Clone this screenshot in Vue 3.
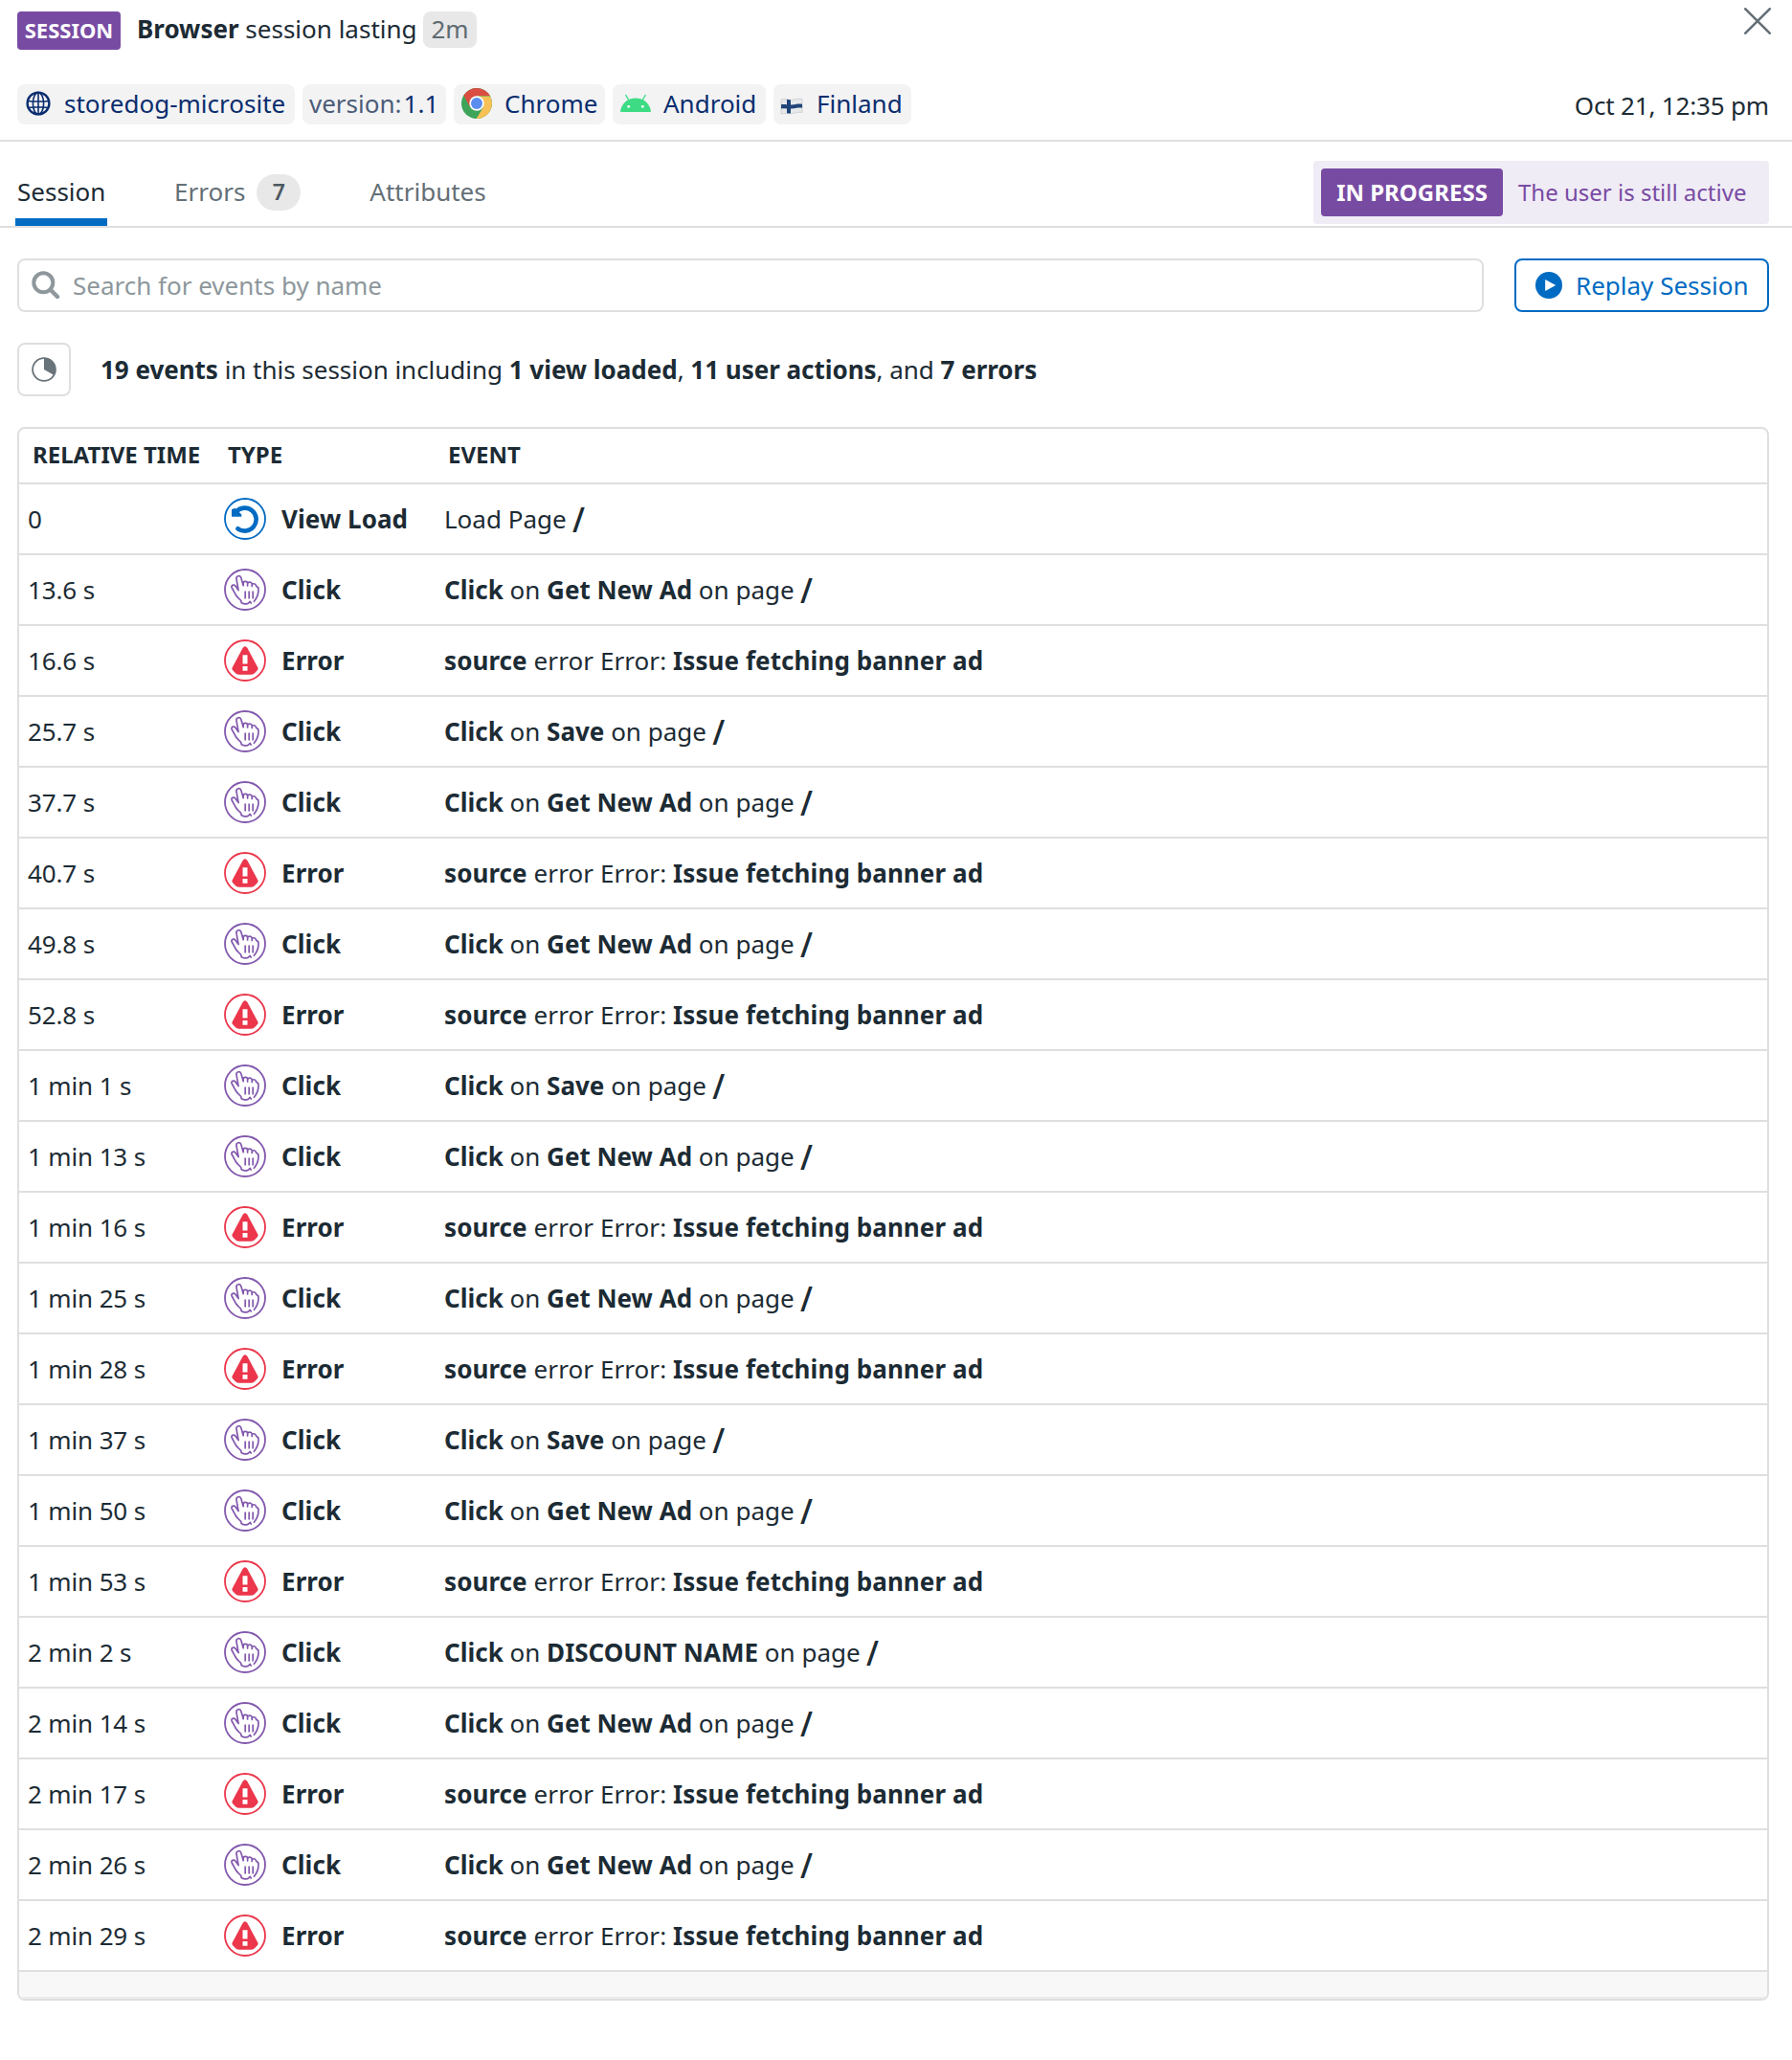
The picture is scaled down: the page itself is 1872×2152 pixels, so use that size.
<script setup>
const click = (time, target) => ({
  time,
  type: 'click',
  label: 'Click',
  parts: [['Click', 1], [' on ', 0], [target, 1], [' on page ', 0]],
  path: '/',
})
const error = (time) => ({
  time,
  type: 'error',
  label: 'Error',
  parts: [['source', 1], [' error Error: ', 0], ['Issue fetching banner ad', 1]],
})

const ad = 'Get New Ad'
const events = [
  { time: '0', type: 'view', label: 'View Load', parts: [['Load Page ', 0]], path: '/' },
  click('13.6 s', ad),
  error('16.6 s'),
  click('25.7 s', 'Save'),
  click('37.7 s', ad),
  error('40.7 s'),
  click('49.8 s', ad),
  error('52.8 s'),
  click('1 min 1 s', 'Save'),
  click('1 min 13 s', ad),
  error('1 min 16 s'),
  click('1 min 25 s', ad),
  error('1 min 28 s'),
  click('1 min 37 s', 'Save'),
  click('1 min 50 s', ad),
  error('1 min 53 s'),
  click('2 min 2 s', 'DISCOUNT NAME'),
  click('2 min 14 s', ad),
  error('2 min 17 s'),
  click('2 min 26 s', ad),
  error('2 min 29 s'),
]

const summary = [
  ['19 events', 1], [' in this session including ', 0], ['1 view loaded', 1], [', ', 0],
  ['11 user actions', 1], [', and ', 0], ['7 errors', 1],
]
</script>

<template>
  <main class="panel">
    <header class="head">
      <div class="title-row">
        <span class="badge">SESSION</span>
        <h1 class="title"><b>Browser</b>{{ ' session lasting' }}</h1>
        <span class="duration">2m</span>
        <button class="close" aria-label="Close">
          <svg width="28" height="28" viewBox="0 0 28 28"><path d="M1.3 1.3 26.7 26.7M26.7 1.3 1.3 26.7" fill="none" stroke="#646f76" stroke-width="2.6" stroke-linecap="round" /></svg>
        </button>
      </div>
      <div class="tag-row">
        <span class="tag tag-site">
          <svg width="26" height="26" viewBox="0 0 26 26" fill="none" stroke="#0a2d6e" stroke-width="1.6">
            <circle cx="13" cy="13" r="11.4" stroke-width="2.4" />
            <ellipse cx="13" cy="13" rx="5.6" ry="11.4" />
            <path d="M13 1.6v22.800M1.600 10.500q11.400 1 22.800 0M2.800 17.500q10.200-1.600 20.400 0" />
          </svg>
          <span class="t-site">storedog-microsite</span>
        </span>
        <span class="tag tag-version"><span class="key">version:</span><span class="value">1.1</span></span>
        <span class="tag tag-chrome">
          <svg width="32" height="32" viewBox="0 0 32 32">
            <circle cx="16" cy="16" r="16" fill="#3da45a" />
            <path d="M16 16 2.4 7.6A16 16 0 0 1 29.9 8H16z" fill="#da4d42" />
            <path d="M2.4 7.6 9 20 16 16V8z" fill="#da4d42" />
            <path d="M16 8.5h14.1A16 16 0 0 1 15.6 32L22.9 20z" fill="#f7c155" />
            <circle cx="16" cy="16" r="7.7" fill="#fff" />
            <circle cx="16" cy="16" r="6" fill="#5b8def" />
          </svg>
          <span>Chrome</span>
        </span>
        <span class="tag tag-android">
          <svg width="32" height="32" viewBox="0 0 32 32">
            <path d="M0 25C.6 16.500 7.500 10.500 16 10.500S31.400 16.500 32 25z" fill="#3ddc84" />
            <path d="M9 13 5.800 7.400M23 13l3.200-5.600" stroke="#3ddc84" stroke-width="1.3" stroke-linecap="round" />
            <circle cx="8.700" cy="19.300" r="1.400" fill="#fff" />
            <circle cx="23.300" cy="19.300" r="1.400" fill="#fff" />
          </svg>
          <span>Android</span>
        </span>
        <span class="tag tag-finland">
          <svg width="24" height="18" viewBox="0 0 24 18">
            <path d="M1 2C5 .2 8 3 12 2.400S19 .6 23 1.300V15.500C19 14.800 16 16 12 16.600S5 15.800 1 17z" fill="#e6e8ea" stroke="#c3c7cb" stroke-width=".7" />
            <path d="M1 7.200c4-1 7 .8 11 .4s7-1.600 11-.8v4c-4-.8-7 .4-11 .8s-7-1.200-11 0z" fill="#1f4478" />
            <path d="M7 1.800 11 2.400V16.600L7 16.200z" fill="#1f4478" />
          </svg>
          <span>Finland</span>
        </span>
        <time class="date">Oct 21, 12:35 pm</time>
      </div>
    </header>

    <nav class="tabs">
      <a class="tab active">Session</a>
      <a class="tab tab-errors">Errors<span class="count">7</span></a>
      <a class="tab tab-attrs">Attributes</a>
      <div class="status">
        <span class="status-badge">IN PROGRESS</span>
        <span class="status-text">The user is still active</span>
      </div>
    </nav>

    <section class="tools">
      <div class="search">
        <svg width="30" height="30" viewBox="0 0 30 30" fill="none" stroke="#8d979c"><circle cx="12.300" cy="12.300" r="10" stroke-width="4" /><path d="m19.800 19.800 7.200 7.200" stroke-width="4.400" stroke-linecap="round" /></svg>
        <span>Search for events by name</span>
      </div>
      <button class="replay">
        <svg width="28" height="28" viewBox="0 0 28 28"><circle cx="14" cy="14" r="14" fill="#006bc2" /><path d="M10.200 8v12l11-6z" fill="#fff" /></svg>
        <span>Replay Session</span>
      </button>
    </section>

    <section class="summary">
      <button class="pie" aria-label="Breakdown">
        <svg width="26" height="26" viewBox="0 0 26 26"><circle cx="13" cy="13" r="11.900" fill="none" stroke="#69737a" stroke-width="1.800" /><path d="M13 13V1A12 12 0 0 1 23.500 19z" fill="#69737a" /></svg>
      </button>
      <p><span v-for="(p, i) in summary" :key="i" :class="{ strong: p[1] }">{{ p[0] }}</span></p>
    </section>

    <section class="table">
      <div class="row thead">
        <span class="c-time">RELATIVE TIME</span>
        <span class="c-type">TYPE</span>
        <span class="c-event">EVENT</span>
      </div>
      <div v-for="(e, i) in events" :key="i" class="row">
        <span class="c-time elapsed">{{ e.time }}</span>
        <span class="c-type">
          <svg v-if="e.type === 'view'" width="44" height="44" viewBox="0 0 44 44">
            <circle cx="22" cy="22" r="21" fill="none" stroke="#006bc2" stroke-width="1.800" />
            <path d="M12.800 14.500A12 12 0 1 1 14.500 32.300" fill="none" stroke="#006bc2" stroke-width="4.600" stroke-linecap="round" />
            <path d="M8 12.300 11.500 10.800 18.300 17.500V19.800H8z" fill="#006bc2" />
          </svg>
          <svg v-else-if="e.type === 'click'" width="44" height="44" viewBox="0 0 44 44" fill="none" stroke="#8258ad">
            <circle cx="22" cy="22" r="21" stroke-width="1.800" />
            <path stroke-width="1.700" stroke-linejoin="round" stroke-linecap="round" d="M18.200 35.700 17.700 33.300C15 31 12.800 29 11.600 26.200L8.200 20C7 17.600 10.400 16 12 18.200L15.100 22.600 13 10.800C12.600 7.200 17 6.600 17.900 9.800L20.200 17.700V15.200C20.200 12.800 24.200 12.600 24.600 15V17.900 15.700C25.200 13.400 28.800 13.600 29.200 15.800V18.400 17C30 15 33.200 15.500 33.400 17.800L35.800 20C36.600 25 35.600 29 31.400 34.300M18.200 35.700C19.500 37 24.800 37.200 25.600 36L27.200 34.400 28.200 36" />
            <path stroke-width="1.700" d="M22.200 23.500v8M26.200 23.500v8M30.200 23.500v8" />
          </svg>
          <svg v-else width="44" height="44" viewBox="0 0 44 44">
            <circle cx="22" cy="22" r="21" fill="none" stroke="#eb364b" stroke-width="1.800" />
            <path d="M19.700 8.800Q22 5.600 24.300 8.800L35.400 29.500Q36 31 34.800 32.300C32.500 34.800 31 36.800 28 36.800H16C13 36.800 11.500 34.800 9.200 32.300Q8 31 8.600 29.500z" fill="#eb364b" />
            <path d="M19.500 16.300h5v9.200h-5zM19.500 28h5v4.800h-5z" fill="#fff" />
          </svg>
          <span class="strong label">{{ e.label }}</span>
        </span>
        <span class="c-event" :class="e.type"><span v-for="(p, j) in e.parts" :key="j" :class="{ strong: p[1] }">{{ p[0] }}</span><span v-if="e.path" class="path">{{ e.path }}</span></span>
      </div>
      <div class="tfoot"></div>
    </section>
  </main>
</template>

<style>
body {
  background: #fff;
}
</style>

<style scoped>
* {
  box-sizing: border-box;
}
.panel {
  width: 1872px;
  height: 2152px;
  overflow: hidden;
  background: #fff;
  color: #1c2b34;
  font: 400 26px/36px 'Noto Sans', sans-serif;
  white-space: pre;
}
svg {
  display: block;
  flex: none;
}
button {
  margin: 0;
  padding: 0;
  background: #fff;
  border: 0;
  font: inherit;
  color: inherit;
}
b,
.strong {
  font-weight: 700;
}
.head {
  height: 148px;
  border-bottom: 2px solid #dfdfe0;
  padding: 8px 24px 0 18px;
}
.title-row {
  display: flex;
  align-items: flex-start;
  height: 80px;
  padding-top: 4px;
}
.badge {
  width: 108px;
  height: 40px;
  border-radius: 4px;
  background: #784ba3;
  color: #fff;
  font-weight: 700;
  font-size: 22px;
  line-height: 38px;
  text-align: center;
}
.title {
  margin: 0 0 0 17px;
  width: 299px;
  font-size: 26px;
  font-weight: 400;
  line-height: 36px;
}
.duration {
  width: 56px;
  height: 38px;
  border-radius: 8px;
  background: #e8e8e8;
  color: #5f6b72;
  line-height: 36px;
  text-align: center;
}
.close {
  margin: -4px -2px 0 auto;
  width: 28px;
}
.tag-row {
  display: flex;
  gap: 8px;
  line-height: 42px;
}
.tag {
  display: flex;
  align-items: center;
  height: 42px;
  border-radius: 8px;
  background: #f3f3f4;
  color: #0a2d6e;
}
.tag span {
  line-height: 40px;
  padding-bottom: 2px;
}
.tag-site { width: 290px; padding-left: 9px; gap: 14px; }
.tag-site svg { margin-top: -2px; }
.tag-version { width: 150px; padding-left: 7px; gap: 2px; }
.key { color: #4c5c77; }
.tag-chrome { width: 158px; padding-left: 8px; gap: 13px; }
.tag-chrome svg { margin-top: -2px; }
.tag-android { width: 160px; padding-left: 8px; gap: 13px; }
.tag-android svg { margin-top: -2px; }
.tag-finland { width: 144px; padding-left: 7px; gap: 14px; }
.tag-finland svg { margin-top: 3px; }
.date {
  margin-left: auto;
  padding-top: 1px;
  letter-spacing: -0.17px;
}
.tabs {
  display: flex;
  align-items: flex-start;
  height: 90px;
  padding-right: 24px;
  padding-left: 16px;
  border-bottom: 2px solid #dfdfe0;
}
.tab {
  display: flex;
  align-items: center;
  height: 88px;
  padding-top: 16px;
  color: #646f76;
}
.active {
  width: 96px;
  padding-left: 2px;
  padding-top: 24px;
  border-bottom: 8px solid #006bc2;
  color: #1c2b34;
}
.tab-errors {
  margin-left: 70px;
}
.tab-attrs {
  margin-left: 72px;
}
.count {
  width: 46px;
  height: 38px;
  margin: 2px 0 0 12px;
  border-radius: 19px;
  background: #e8e8e8;
  color: #4c585f;
  font-size: 23px;
  font-weight: 600;
  line-height: 36px;
  text-align: center;
}
.status {
  display: flex;
  align-items: center;
  width: 476px;
  height: 66px;
  margin: 20px 0 0 auto;
  padding-left: 8px;
  border-radius: 4px;
  background: #f0ecf6;
  color: #784ba3;
}
.status-badge {
  width: 190px;
  height: 50px;
  border-radius: 4px;
  background: #784ba3;
  color: #fff;
  font-size: 24px;
  font-weight: 700;
  line-height: 50px;
  text-align: center;
}
.status-text {
  margin-left: 16px;
  font-size: 24px;
}
.tools {
  display: flex;
  justify-content: space-between;
  padding: 32px 24px 0 18px;
}
.search,
.replay {
  display: flex;
  align-items: center;
  height: 56px;
  border-radius: 8px;
  border: 2px solid #dfdfe0;
}
.search {
  width: 1532px;
  padding-left: 13px;
  gap: 13px;
  color: #8d979c;
}
.replay {
  width: 266px;
  border-color: #006bc2;
  padding-left: 20px;
  gap: 14px;
  color: #006bc2;
}
.summary {
  display: flex;
  align-items: center;
  padding: 32px 0 32px 18px;
}
.pie {
  display: flex;
  align-items: center;
  justify-content: center;
  width: 56px;
  height: 56px;
  border: 2px solid #dfdfe0;
  border-radius: 8px;
}
.summary p {
  margin: 0 0 0 31px;
  letter-spacing: -0.025px;
}
.table {
  width: 1830px;
  height: 1644px;
  margin-left: 18px;
  border: 2px solid #dfdfe0;
  border-radius: 8px;
  overflow: hidden;
}
.row {
  display: flex;
  align-items: center;
  height: 74px;
  padding-left: 10px;
  border-bottom: 2px solid #dfdfe0;
}
.c-time {
  width: 204px;
}
.elapsed {
  padding-right: 1px;
  margin-left: -1px;
  width: 205px;
  letter-spacing: -0.14px;
}
.c-type {
  display: flex;
  align-items: center;
  width: 230px;
}
.label {
  margin-left: 16px;
  letter-spacing: 0.07px;
}
.c-event.error {
  letter-spacing: 0.08px;
}
.thead {
  height: 58px;
  padding: 0 0 2px 14px;
  font-size: 24px;
  font-weight: 700;
}
.path {
  font: 700 34px/0 Roboto, sans-serif;
  vertical-align: -2px;
}
.tfoot {
  height: 28px;
  background: #f8f8f8;
  border-bottom: 2px solid #ebebeb;
}
</style>
